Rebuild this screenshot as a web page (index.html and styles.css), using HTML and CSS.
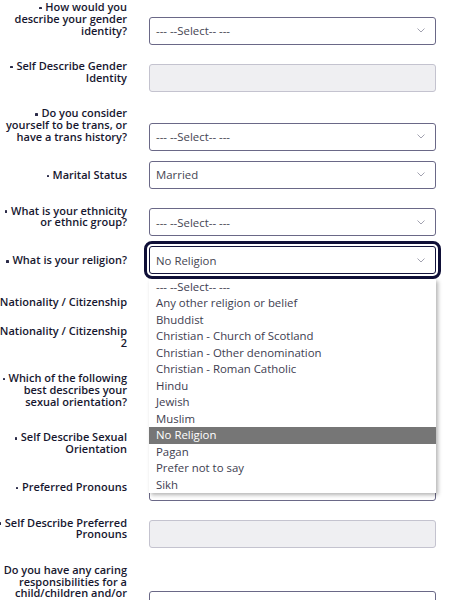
FILE: index.html
```html
<!DOCTYPE html>
<html lang="en">
<head>
<meta charset="utf-8">
<title>Equality form</title>
<link rel="stylesheet" href="styles.css">
</head>
<body>
<div class="form">
  <div class="row">
    <label class="lbl"><span class="req"></span>How would you describe your gender identity?</label>
    <div class="ctl"><div class="select"><span>--- --Select-- ---</span><svg class="chev" width="8" height="5" viewBox="0 0 8 5"><polyline points="0.5,0.5 4,4 7.5,0.5"/></svg></div></div>
  </div>
  <div class="row">
    <label class="lbl"><span class="req"></span>Self Describe Gender Identity</label>
    <div class="ctl"><div class="input disabled"></div></div>
  </div>
  <div class="row">
    <label class="lbl"><span class="req"></span>Do you consider yourself to be trans, or have a trans history?</label>
    <div class="ctl"><div class="select"><span>--- --Select-- ---</span><svg class="chev" width="8" height="5" viewBox="0 0 8 5"><polyline points="0.5,0.5 4,4 7.5,0.5"/></svg></div></div>
  </div>
  <div class="row">
    <label class="lbl"><span class="req"></span>Marital Status</label>
    <div class="ctl"><div class="select"><span>Married</span><svg class="chev" width="8" height="5" viewBox="0 0 8 5"><polyline points="0.5,0.5 4,4 7.5,0.5"/></svg></div></div>
  </div>
  <div class="row">
    <label class="lbl"><span class="req"></span>What is your ethnicity or ethnic group?</label>
    <div class="ctl"><div class="select"><span>--- --Select-- ---</span><svg class="chev" width="8" height="5" viewBox="0 0 8 5"><polyline points="0.5,0.5 4,4 7.5,0.5"/></svg></div></div>
  </div>
  <div class="row">
    <label class="lbl"><span class="req"></span>What is your religion?</label>
    <div class="ctl open">
      <div class="select focus"><span>No Religion</span><svg class="chev" width="8" height="5" viewBox="0 0 8 5"><polyline points="0.5,0.5 4,4 7.5,0.5"/></svg></div>
      <ul class="list">
        <li>--- --Select-- ---</li>
        <li>Any other religion or belief</li>
        <li>Bhuddist</li>
        <li>Christian - Church of Scotland</li>
        <li>Christian - Other denomination</li>
        <li>Christian - Roman Catholic</li>
        <li>Hindu</li>
        <li>Jewish</li>
        <li>Muslim</li>
        <li class="hl">No Religion</li>
        <li>Pagan</li>
        <li>Prefer not to say</li>
        <li>Sikh</li>
      </ul>
    </div>
  </div>
  <div class="row nat1">
    <label class="lbl">Nationality / Citizenship</label>
    <div class="ctl"><div class="select"></div></div>
  </div>
  <div class="row nat2">
    <label class="lbl">Nationality / Citizenship 2</label>
    <div class="ctl"><div class="select"></div></div>
  </div>
  <div class="row">
    <label class="lbl"><span class="req"></span>Which of the following best describes your sexual orientation?</label>
    <div class="ctl"><div class="select"></div></div>
  </div>
  <div class="row">
    <label class="lbl"><span class="req"></span>Self Describe Sexual Orientation</label>
    <div class="ctl"><div class="input disabled"></div></div>
  </div>
  <div class="row">
    <label class="lbl"><span class="req"></span>Preferred Pronouns</label>
    <div class="ctl"><div class="select"></div></div>
  </div>
  <div class="row">
    <label class="lbl"><span class="req"></span>Self Describe Preferred Pronouns</label>
    <div class="ctl"><div class="input disabled"></div></div>
  </div>
  <div class="row">
    <label class="lbl"><span class="req"></span>Do you have any caring responsibilities for a child/children and/or adult?</label>
    <div class="ctl"><div class="select"></div></div>
  </div>
</div>
</body>
</html>
```

FILE: styles.css
```css
html, body {
  margin: 0;
  padding: 0;
  overflow: hidden;
  background: #ffffff;
}

body {
  font-family: "Open Sans", "Noto Sans", sans-serif;
  font-size: 11px;
  color: #17172f;
}

.form {
  display: flex;
  flex-direction: column;
  margin: -4.5px 0 0 -3px;
}

.row {
  display: flex;
  align-items: flex-end;
  gap: 22px;
}

.row + .row {
  margin-top: 10px;
}

.row.nat1 {
  margin-top: 13.4px;
}

.row.nat2 {
  margin-top: 3.7px;
}

.lbl {
  flex: 0 0 130px;
  width: 130px;
  box-sizing: border-box;
  text-align: right;
  font-size: 11px;
  font-weight: 600;
  line-height: 11.8px;
  padding: 5.6px 0 8.1px;
  color: #17172f;
}

.req {
  display: inline-block;
  width: 2.4px;
  height: 2.4px;
  margin-right: 3.6px;
  border-radius: 0.6px;
  background: #2a2a48;
  vertical-align: middle;
}

.ctl {
  flex: 0 0 287px;
  width: 287px;
  position: relative;
}

.select,
.input {
  box-sizing: border-box;
  height: 28px;
  border: 1px solid #6a6887;
  border-radius: 3px;
  background: #ffffff;
}

.select {
  display: flex;
  align-items: center;
  justify-content: space-between;
  padding: 0 10px 0 6px;
  color: #454552;
  font-size: 11.4px;
}

.chev {
  display: block;
  fill: none;
  stroke: #a2a2b0;
  stroke-width: 1;
}

.input.disabled {
  background: #efeff2;
  border-color: #c4c3cf;
}

.select.focus {
  border-color: #14143c;
  outline: 3px solid #0f0f37;
  outline-offset: 2px;
}

.list {
  position: absolute;
  left: 0;
  right: 0;
  top: calc(100% + 4.7px);
  z-index: 5;
  margin: 0;
  padding: 0;
  list-style: none;
  background: #ffffff;
  box-shadow: 2px 2px 4px rgba(0, 0, 0, 0.3);
}

.list li {
  height: 16.5px;
  line-height: 16.5px;
  padding-left: 7px;
  font-size: 11.4px;
  color: #3d3d50;
  white-space: nowrap;
}

.list li.hl {
  background: #767676;
  color: #ffffff;
}
```
